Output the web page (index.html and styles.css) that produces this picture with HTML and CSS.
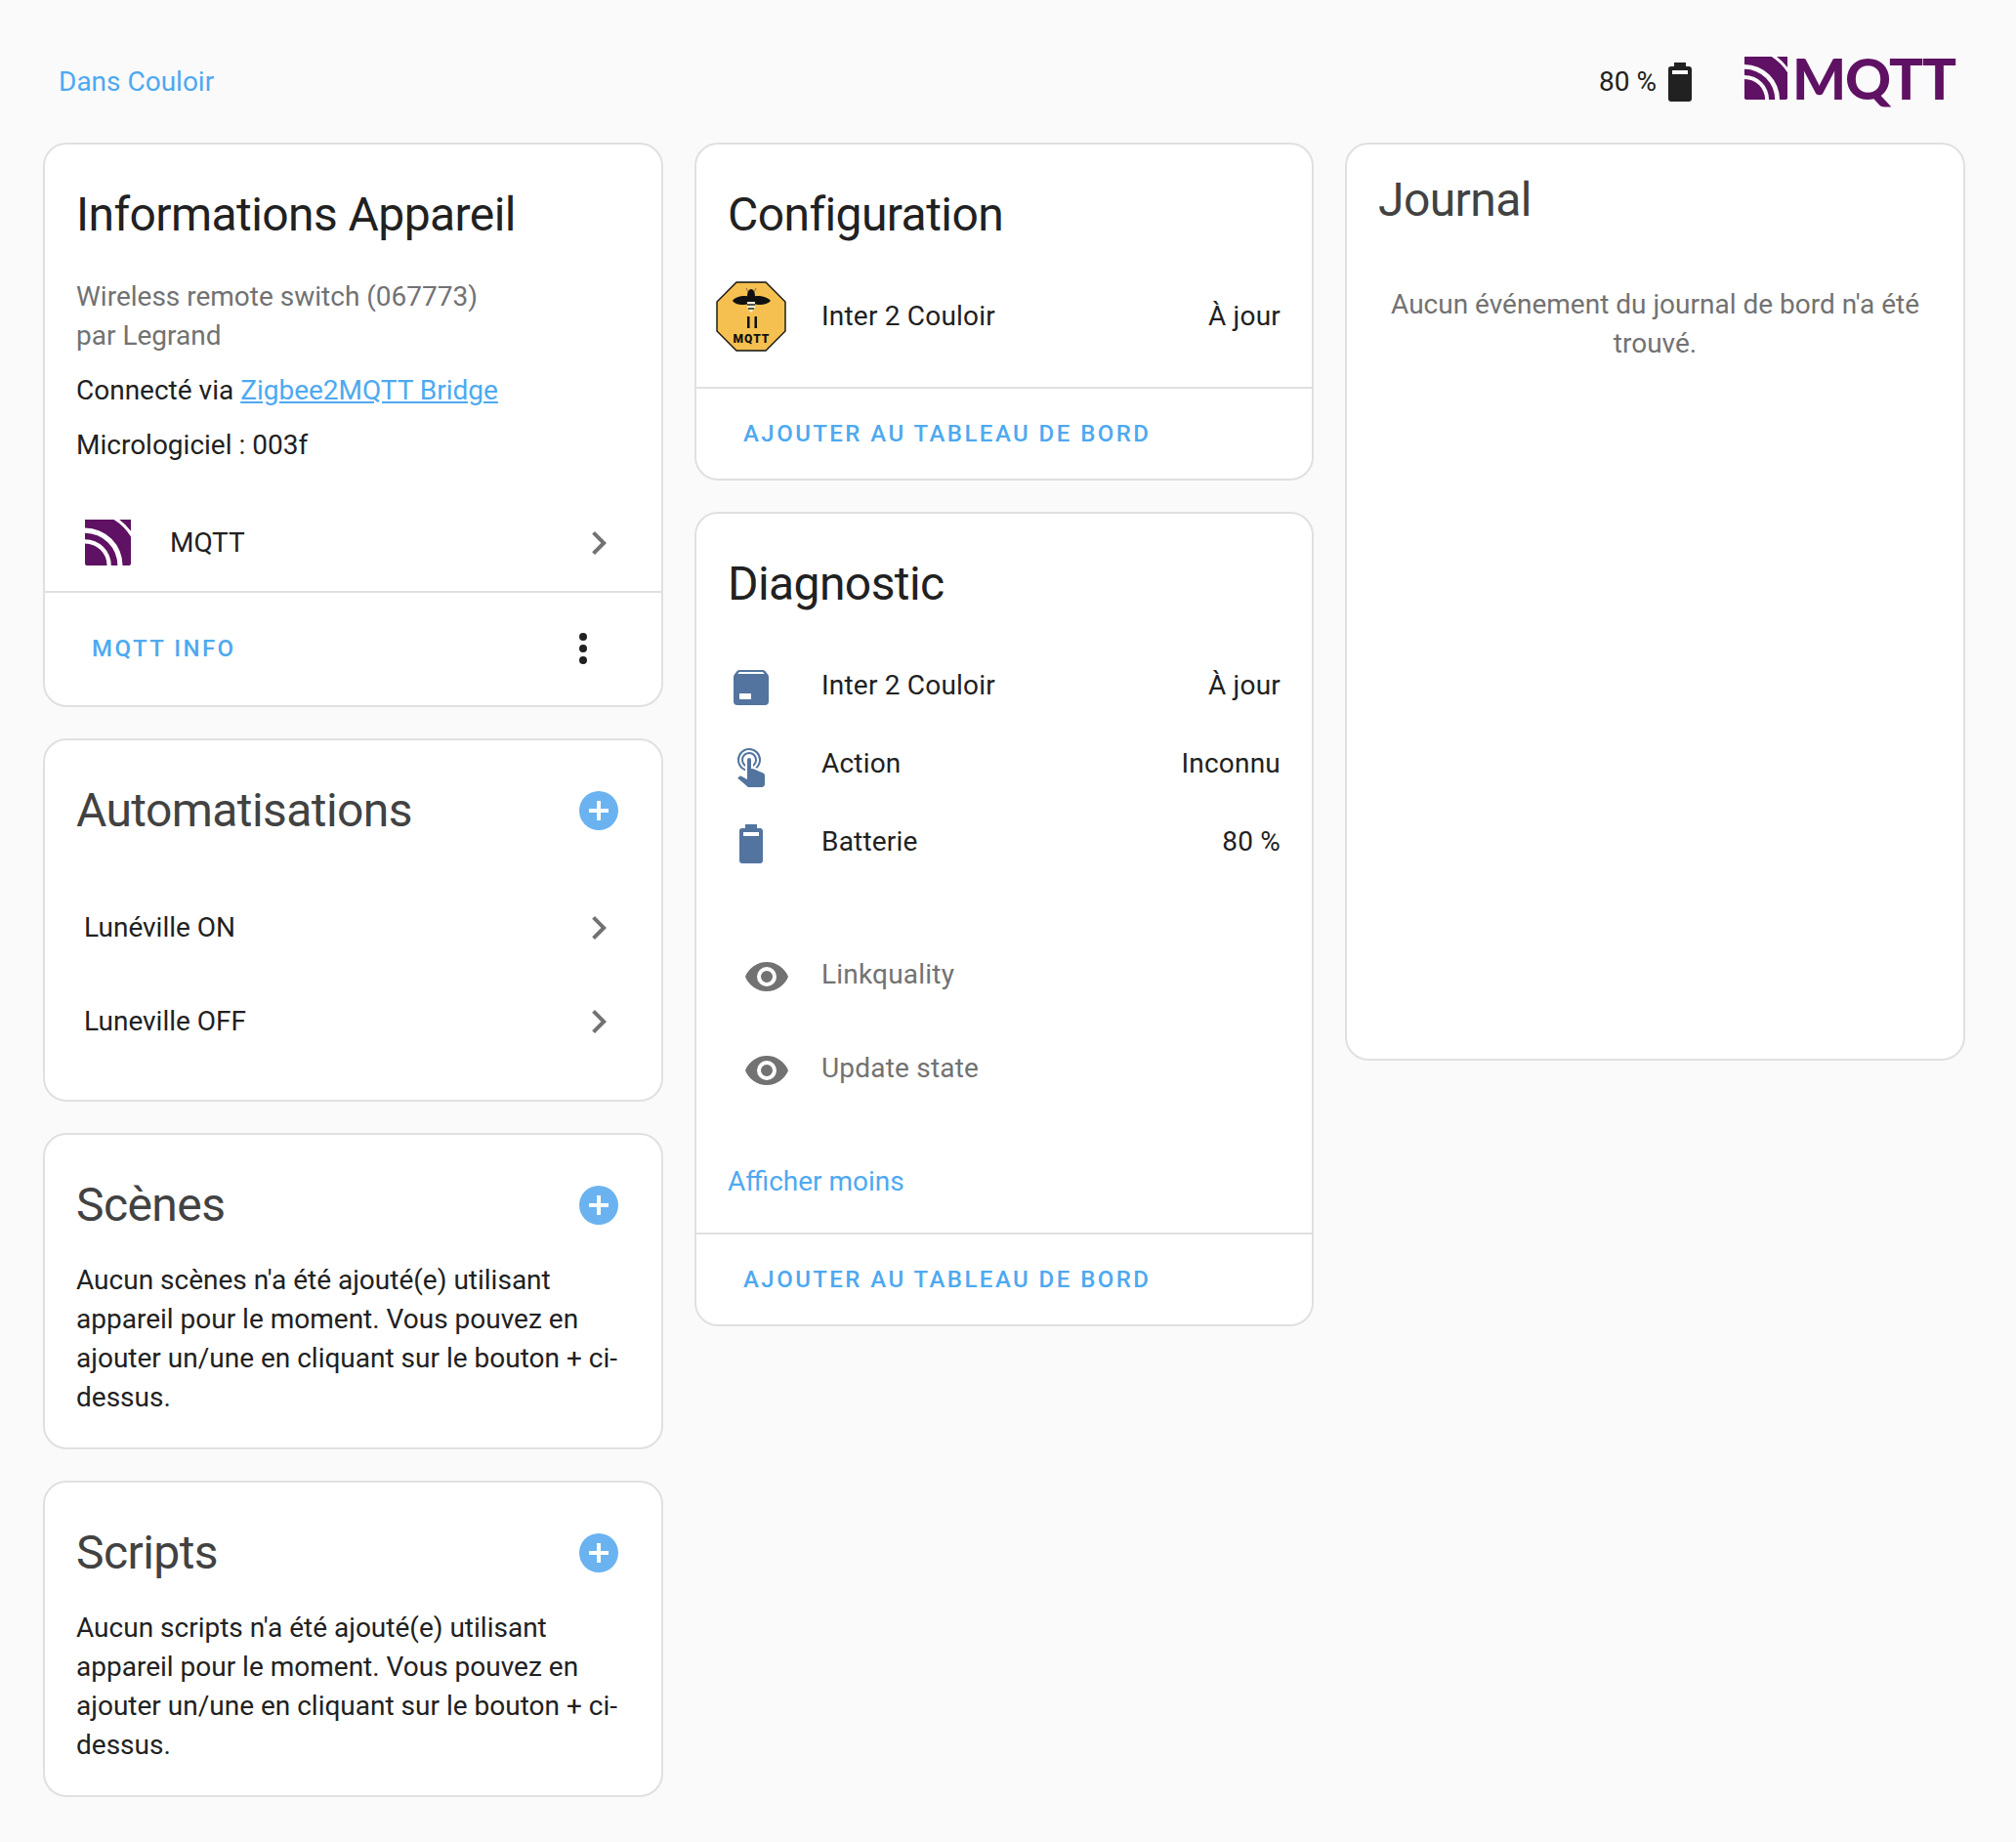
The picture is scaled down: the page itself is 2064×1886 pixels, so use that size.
FILE: index.html
```html
<!DOCTYPE html>
<html lang="fr">
<head>
    <meta charset="UTF-8">
    <title>Inter 2 Couloir</title>
    <link rel="stylesheet" href="styles.css">
</head>

<body>
    <svg class="defs" width="0" height="0">
        <symbol id="mqtt-mark" viewBox="0 0 100 100">
            <path d="M4 100A4 4 0 0 1 0 96V52A48 48 0 0 1 48 100Z" />
            <path d="M0 43A57 57 0 0 1 57 100H71A71 71 0 0 0 0 29Z" />
            <path d="M0 18A82 82 0 0 1 82 100H96A4 4 0 0 0 100 96V37A118 118 0 0 0 63 0H0Z" />
            <path d="M75 0A125 125 0 0 1 100 25V0Z" />
        </symbol>
    </svg>

    <header class="top">
        <a class="area-link">Dans Couloir</a>
        <div class="top-right">
            <span>80 %</span>
            <svg class="icon icon-dark" viewBox="0 0 24 24"><path d="M16,8H8V6H16M16.67,4H15V2H9V4H7.33A1.33,1.33 0 0,0 6,5.33V20.66C6,21.4 6.6,22 7.33,22H16.67C17.41,22 18,21.41 18,20.67V5.33C18,4.6 17.4,4 16.67,4Z" /></svg>
            <div class="logo">
                <svg class="logo-mark"><use href="#mqtt-mark" /></svg>
                <span class="logo-text">MQTT</span>
            </div>
        </div>
    </header>

    <main class="columns">
        <div class="column">
            <section class="card">
                <h1 class="card-title">Informations Appareil</h1>
                <div class="info">
                    <div class="muted">Wireless remote switch (067773)<br>par Legrand</div>
                    <div class="info-line">Connecté via <a class="link">Zigbee2MQTT Bridge</a></div>
                    <div class="info-line">Micrologiciel : 003f</div>
                </div>
                <div class="integration">
                    <svg class="integration-mark"><use href="#mqtt-mark" /></svg>
                    <span class="integration-name">MQTT</span>
                    <svg class="icon icon-grey" viewBox="0 0 24 24"><path d="M8.59,16.58L13.17,12L8.59,7.41L10,6L16,12L10,18L8.59,16.58Z" /></svg>
                </div>
                <div class="actions actions-split">
                    <a class="action">MQTT INFO</a>
                    <svg class="icon icon-dark" viewBox="0 0 24 24"><path d="M12,16A2,2 0 0,1 14,18A2,2 0 0,1 12,20A2,2 0 0,1 10,18A2,2 0 0,1 12,16M12,10A2,2 0 0,1 14,12A2,2 0 0,1 12,14A2,2 0 0,1 10,12A2,2 0 0,1 12,10M12,4A2,2 0 0,1 14,6A2,2 0 0,1 12,8A2,2 0 0,1 10,6A2,2 0 0,1 12,4Z" /></svg>
                </div>
            </section>

            <section class="card">
                <div class="title-row">
                    <h2 class="card-title soft">Automatisations</h2>
                    <svg class="icon icon-add" viewBox="0 0 24 24"><path fill-rule="evenodd" d="M17,13H13V17H11V13H7V11H11V7H13V11H17M12,2A10,10 0 0,0 2,12A10,10 0 0,0 12,22A10,10 0 0,0 22,12A10,10 0 0,0 12,2Z" /></svg>
                </div>
                <div class="auto-list">
                    <div class="auto-row">
                        <span>Lunéville ON</span>
                        <svg class="icon icon-grey" viewBox="0 0 24 24"><path d="M8.59,16.58L13.17,12L8.59,7.41L10,6L16,12L10,18L8.59,16.58Z" /></svg>
                    </div>
                    <div class="auto-row">
                        <span>Luneville OFF</span>
                        <svg class="icon icon-grey" viewBox="0 0 24 24"><path d="M8.59,16.58L13.17,12L8.59,7.41L10,6L16,12L10,18L8.59,16.58Z" /></svg>
                    </div>
                </div>
            </section>

            <section class="card">
                <div class="title-row">
                    <h2 class="card-title soft">Scènes</h2>
                    <svg class="icon icon-add" viewBox="0 0 24 24"><path fill-rule="evenodd" d="M17,13H13V17H11V13H7V11H11V7H13V11H17M12,2A10,10 0 0,0 2,12A10,10 0 0,0 12,22A10,10 0 0,0 22,12A10,10 0 0,0 12,2Z" /></svg>
                </div>
                <p class="empty">Aucun scènes n'a été ajouté(e) utilisant appareil pour le moment. Vous pouvez en ajouter un/une en cliquant sur le bouton + ci-dessus.</p>
            </section>

            <section class="card">
                <div class="title-row">
                    <h2 class="card-title soft">Scripts</h2>
                    <svg class="icon icon-add" viewBox="0 0 24 24"><path fill-rule="evenodd" d="M17,13H13V17H11V13H7V11H11V7H13V11H17M12,2A10,10 0 0,0 2,12A10,10 0 0,0 12,22A10,10 0 0,0 22,12A10,10 0 0,0 12,2Z" /></svg>
                </div>
                <p class="empty">Aucun scripts n'a été ajouté(e) utilisant appareil pour le moment. Vous pouvez en ajouter un/une en cliquant sur le bouton + ci-dessus.</p>
            </section>
        </div>

        <div class="column">
            <section class="card">
                <h2 class="card-title">Configuration</h2>
                <div class="entity entity-config">
                    <svg class="bee" viewBox="0 0 72 72">
                        <path class="bee-plate" d="M21 1H51L71 21V51L51 71H21L1 51V21Z" />
                        <path class="bee-line" d="M33 11L31 7M39 11L41 7" />
                        <ellipse class="bee-black" cx="36" cy="15" rx="4" ry="7" />
                        <path class="bee-black" d="M17 20C20 15 30 14 36 16C42 14 52 15 56 20C52 25 42 25 36 22C30 25 20 25 17 20Z" />
                        <path class="bee-body" d="M32 21H40V27L36 32L32 27Z" />
                        <path class="bee-stripe" d="M32 24H40M33 28H39" />
                        <rect class="bee-black" x="32" y="36" width="2.5" height="12" />
                        <rect class="bee-black" x="39.5" y="36" width="2.5" height="12" />
                        <text class="bee-text" x="36.5" y="63">MQTT</text>
                    </svg>
                    <span class="entity-name">Inter 2 Couloir</span>
                    <span class="entity-value">À jour</span>
                </div>
                <div class="actions">
                    <a class="action">AJOUTER AU TABLEAU DE BORD</a>
                </div>
            </section>

            <section class="card">
                <h2 class="card-title">Diagnostic</h2>
                <div class="entities">
                    <div class="entity">
                        <svg class="icon icon-blue" viewBox="0 0 24 24"><path fill-rule="evenodd" d="M5.12,5L5.94,4H17.94L18.87,5M6,18H12V15H6M20.54,5.23L19.15,3.55C18.88,3.21 18.47,3 18,3H6C5.53,3 5.12,3.21 4.84,3.55L3.46,5.23C3.17,5.57 3,6 3,6.5V19A2,2 0 0,0 5,21H19A2,2 0 0,0 21,19V6.5C21,6 20.83,5.57 20.54,5.23Z" /></svg>
                        <span class="entity-name">Inter 2 Couloir</span>
                        <span class="entity-value">À jour</span>
                    </div>
                    <div class="entity">
                        <svg class="icon icon-blue" viewBox="0 0 24 24"><path d="M10,9A1,1 0 0,1 11,8A1,1 0 0,1 12,9V13.47L13.21,13.6L18.15,15.79C18.68,16.03 19,16.56 19,17.14V21.5C18.97,22.32 18.32,22.97 17.5,23H11C10.62,23 10.26,22.85 10,22.57L5.1,18.37L5.84,17.6C6.03,17.39 6.3,17.28 6.58,17.28H6.8L10,19V9M11,5A4,4 0 0,1 15,9C15,10.5 14.2,11.77 13,12.46V11.24C13.61,10.69 14,9.89 14,9A3,3 0 0,0 11,6A3,3 0 0,0 8,9C8,9.89 8.39,10.69 9,11.24V12.46C7.8,11.77 7,10.5 7,9A4,4 0 0,1 11,5M11,3A6,6 0 0,1 17,9C17,10.7 16.29,12.23 15.16,13.33L14.16,12.88C15.28,11.96 16,10.56 16,9A5,5 0 0,0 11,4A5,5 0 0,0 6,9C6,11.05 7.23,12.81 9,13.58V14.66C6.67,13.83 5,11.61 5,9A6,6 0 0,1 11,3Z" /></svg>
                        <span class="entity-name">Action</span>
                        <span class="entity-value">Inconnu</span>
                    </div>
                    <div class="entity">
                        <svg class="icon icon-blue" viewBox="0 0 24 24"><path fill-rule="evenodd" d="M16,8H8V6H16M16.67,4H15V2H9V4H7.33A1.33,1.33 0 0,0 6,5.33V20.66C6,21.4 6.6,22 7.33,22H16.67C17.41,22 18,21.41 18,20.67V5.33C18,4.6 17.4,4 16.67,4Z" /></svg>
                        <span class="entity-name">Batterie</span>
                        <span class="entity-value">80 %</span>
                    </div>
                </div>
                <div class="disabled-list">
                    <div class="entity entity-off">
                        <svg class="icon icon-grey" viewBox="0 0 24 24"><path d="M12,9A3,3 0 0,0 9,12A3,3 0 0,0 12,15A3,3 0 0,0 15,12A3,3 0 0,0 12,9M12,17A5,5 0 0,1 7,12A5,5 0 0,1 12,7A5,5 0 0,1 17,12A5,5 0 0,1 12,17M12,4.5C7,4.5 2.73,7.61 1,12C2.73,16.39 7,19.5 12,19.5C17,19.5 21.27,16.39 23,12C21.27,7.61 17,4.5 12,4.5Z" /></svg>
                        <span class="entity-name">Linkquality</span>
                    </div>
                    <div class="entity entity-off">
                        <svg class="icon icon-grey" viewBox="0 0 24 24"><path d="M12,9A3,3 0 0,0 9,12A3,3 0 0,0 12,15A3,3 0 0,0 15,12A3,3 0 0,0 12,9M12,17A5,5 0 0,1 7,12A5,5 0 0,1 12,7A5,5 0 0,1 17,12A5,5 0 0,1 12,17M12,4.5C7,4.5 2.73,7.61 1,12C2.73,16.39 7,19.5 12,19.5C17,19.5 21.27,16.39 23,12C21.27,7.61 17,4.5 12,4.5Z" /></svg>
                        <span class="entity-name">Update state</span>
                    </div>
                </div>
                <a class="show-less">Afficher moins</a>
                <div class="actions">
                    <a class="action">AJOUTER AU TABLEAU DE BORD</a>
                </div>
            </section>
        </div>

        <div class="column">
            <section class="card card-logbook">
                <h2 class="card-title soft logbook-title">Journal</h2>
                <p class="logbook-empty">Aucun événement du journal de bord n'a été trouvé.</p>
            </section>
        </div>
    </main>
</body>

</html>
```

FILE: styles.css
```css
/* General */
body {
    margin: 0;
    padding: 0 52px 0 44px;
    background-color: #fafafa;
    font-family: Roboto, sans-serif;
    font-size: 28px;
    line-height: 40px;
    color: #212121;
}

.defs {
    position: absolute;
}

.icon {
    display: block;
    flex: none;
    width: 48px;
    height: 48px;
    fill: currentColor;
}

.icon-dark { color: #212121; }
.icon-grey { color: #727272; }
.icon-blue { color: #52749e; }
.icon-add { color: #6ab3f0; }

/* Header */
.top {
    display: flex;
    justify-content: space-between;
    align-items: center;
    height: 146px;
    padding: 22px 0 0 16px;
    box-sizing: border-box;
}

.area-link {
    color: #4ea9f0;
}

.top-right {
    display: flex;
    align-items: center;
    gap: 0;
}

.logo {
    display: flex;
    align-items: flex-start;
    margin: 0 10px 8px 42px;
    color: #5f1163;
}

.logo-mark {
    width: 44px;
    height: 44px;
    fill: currentColor;
}

.logo-text {
    margin-left: 5px;
    font-family: Lato, sans-serif;
    font-size: 58px;
    font-weight: 900;
    line-height: 44px;
    letter-spacing: -1px;
}

/* Cards */
.columns {
    display: grid;
    grid-template-columns: 635px 634px 635px;
    column-gap: 32px;
    align-items: start;
}

.column {
    display: flex;
    flex-direction: column;
    gap: 32px;
    padding-bottom: 46px;
}

.card {
    background-color: white;
    border: 2px solid #e0e0e0;
    border-radius: 24px;
}

.card-title {
    margin: 0;
    padding: 40px 32px 0;
    font-size: 48px;
    font-weight: 400;
    line-height: 64px;
    letter-spacing: -0.012em;
}

.soft {
    color: #424242;
}

.title-row {
    display: flex;
    justify-content: space-between;
    align-items: flex-start;
}

.title-row .icon {
    margin: 48px 40px 0 0;
}

.link {
    color: #4ea9f0;
    text-decoration: underline;
}

.muted {
    color: #727272;
}

/* Device info */
.info {
    padding: 32px 32px 0;
}

.info-line {
    margin-top: 16px;
}

.integration {
    display: flex;
    align-items: center;
    height: 99px;
    margin-top: 30px;
    padding: 0 40px 0 41px;
}

.integration-mark {
    width: 47px;
    height: 47px;
    fill: #5f1163;
}

.integration-name {
    flex: 1;
    margin-left: 40px;
}

.actions {
    padding: 26px 48px;
    border-top: 2px solid #e0e0e0;
}

.actions-split {
    display: flex;
    justify-content: space-between;
    align-items: center;
    padding: 33px 56px 34px 48px;
}

.action {
    display: block;
    color: #4ea9f0;
    font-size: 24px;
    font-weight: 500;
    letter-spacing: 2.45px;
}

/* Automations */
.auto-list {
    padding: 40px 0 32px;
}

.auto-row {
    display: flex;
    justify-content: space-between;
    align-items: center;
    height: 96px;
    padding: 0 40px;
}

.empty {
    margin: 0;
    padding: 25px 32px 31px;
}

/* Entities */
.entities {
    padding-top: 32px;
}

.entity {
    display: flex;
    align-items: center;
    height: 80px;
    padding: 0 32px;
    letter-spacing: 0.2px;
}

.entity .icon {
    margin-top: 4px;
    margin-right: 48px;
}

.entity-name {
    flex: 1;
}

.entity-config {
    height: 112px;
    padding-left: 20px;
    margin-bottom: 16px;
    margin-top: 16px;
}

.bee {
    flex: none;
    width: 72px;
    height: 72px;
    margin-right: 36px;
}

.bee-plate {
    fill: #f5c04f;
    stroke: #111;
    stroke-width: 1.4;
}

.bee-black {
    fill: #111;
}

.bee-line {
    fill: none;
    stroke: #8a6f2e;
    stroke-width: 1;
}

.bee-body {
    fill: #f8f2d8;
}

.bee-stripe {
    fill: none;
    stroke: #222;
    stroke-width: 1.4;
}

.bee-text {
    font-family: Roboto, sans-serif;
    font-size: 12px;
    font-weight: 900;
    letter-spacing: 1px;
    text-anchor: middle;
    fill: #111;
}

.disabled-list {
    padding-top: 48px;
}

.entity-off {
    height: 96px;
    color: #727272;
}

.entity-off .icon {
    margin-left: 16px;
    margin-right: 32px;
}

.show-less {
    display: block;
    padding: 48px 32px 32px;
    color: #4ea9f0;
}

/* Logbook */
.card-logbook {
    height: 940px;
    box-sizing: border-box;
}

.logbook-title {
    padding-top: 25px;
}

.logbook-empty {
    margin: 0;
    padding: 55px 32px 0;
    color: #727272;
    text-align: center;
}
```
